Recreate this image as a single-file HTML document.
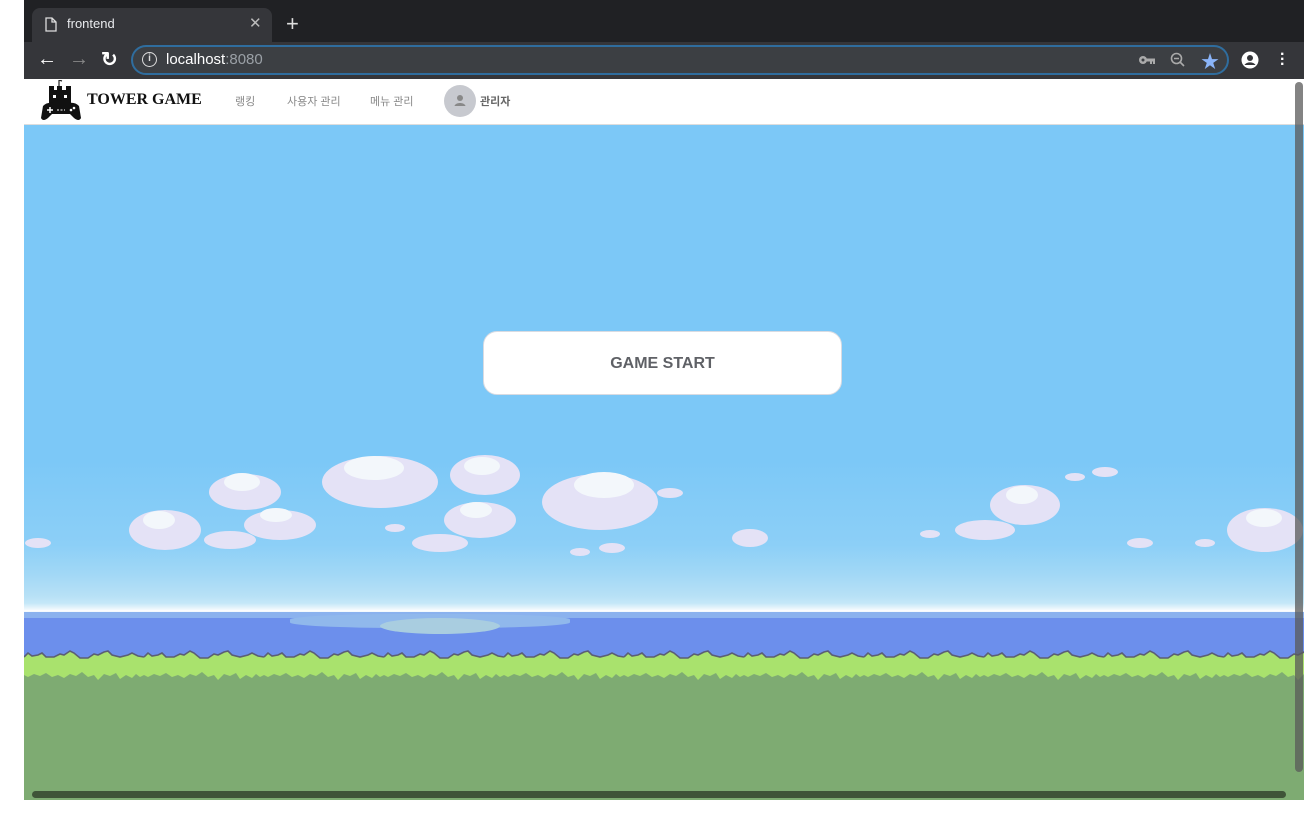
<!DOCTYPE html>
<html><head><meta charset="utf-8"><style>
*{margin:0;padding:0;box-sizing:border-box}
body{width:1304px;height:828px;background:#fff;position:relative;overflow:hidden;font-family:"Liberation Sans","Noto Sans CJK KR",sans-serif}
.abs{position:absolute}
</style></head><body>
<!-- tab bar -->
<div class="abs" style="left:24px;top:0;width:1280px;height:42px;background:#202124"></div>
<div class="abs" style="left:32px;top:8px;width:240px;height:34px;background:#35363a;border-radius:8px 8px 0 0"></div>
<svg class="abs" style="left:45px;top:17px" width="12" height="15" viewBox="0 0 12 15"><path d="M1 1h6l4 4v9H1z M7 1v4h4" fill="none" stroke="#ddd" stroke-width="1.3"/></svg>
<div class="abs" style="left:67px;top:16px;color:#e8eaed;font-size:13px">frontend</div>
<div class="abs" style="left:249px;top:14px;color:#bbb;font-size:15px">✕</div>
<div class="abs" style="left:286px;top:11px;color:#ddd;font-size:22px">+</div>
<!-- toolbar -->
<div class="abs" style="left:24px;top:42px;width:1280px;height:37px;background:#35363a"></div>
<div class="abs" style="left:37px;top:48px;color:#fff;font-size:20px">←</div>
<div class="abs" style="left:69px;top:48px;color:#888;font-size:20px">→</div>
<div class="abs" style="left:101px;top:47px;color:#fff;font-size:20px;font-weight:bold">↻</div>
<div class="abs" style="left:131px;top:45px;width:1098px;height:30px;border:2px solid #2f6d9e;border-radius:15px;background:#3c3f43"></div>
<div class="abs" style="left:142px;top:52px;width:15px;height:15px;border:1.5px solid #ddd;border-radius:50%;color:#ddd;font-size:10px;text-align:center;line-height:12px;font-weight:bold">i</div>
<div class="abs" style="left:166px;top:51px;color:#fff;font-size:15px">localhost<span style="color:#9aa0a6">:8080</span></div>
<svg class="abs" style="left:1138px;top:54px" width="18" height="12"><circle cx="5" cy="6" r="4" fill="#aaa"/><circle cx="5" cy="6" r="1.5" fill="#3c3f43"/><rect x="8" y="4.5" width="9" height="3" fill="#aaa"/><rect x="12" y="6" width="2" height="4" fill="#aaa"/><rect x="15" y="6" width="2" height="4" fill="#aaa"/></svg>
<svg class="abs" style="left:1170px;top:52px" width="16" height="16"><circle cx="6.5" cy="6.5" r="5" fill="none" stroke="#aaa" stroke-width="1.6"/><path d="M4 6.5h5M10 10l4 4" stroke="#aaa" stroke-width="1.6"/></svg>
<div class="abs" style="left:1201px;top:48px;color:#8ab4f8;font-size:18px">★</div>
<svg class="abs" style="left:1241px;top:51px" width="18" height="18"><circle cx="9" cy="9" r="8.5" fill="#fff"/><circle cx="9" cy="7" r="3" fill="#35363a"/><path d="M3.5 14c2-3.5 9-3.5 11 0" fill="#35363a"/></svg>
<div class="abs" style="left:1280px;top:52px;color:#fff;font-size:16px;line-height:5px;font-weight:bold">·<br>·<br>·</div>
<!-- page header -->
<div class="abs" style="left:24px;top:79px;width:1280px;height:46px;background:#fff;border-bottom:1px solid #ddd"></div>
<svg class="abs" style="left:39px;top:80px" width="44" height="42" viewBox="0 0 44 42"><path d="M20 0v6M20 0l3 1" stroke="#222" stroke-width="1.2"/><rect x="10" y="10" width="22" height="18" fill="#111"/><rect x="10" y="6" width="5" height="5" fill="#111"/><rect x="18" y="6" width="5" height="5" fill="#111"/><rect x="27" y="6" width="5" height="5" fill="#111"/><rect x="14" y="15" width="3" height="3" fill="#fff"/><rect x="25" y="15" width="3" height="3" fill="#fff"/><path d="M4 26 Q8 22 14 23 H30 Q36 22 40 26 L42 38 Q40 42 35 38 L31 34 H13 L9 38 Q4 42 2 38Z" fill="#111"/><path d="M8 30h6M11 27v6" stroke="#fff" stroke-width="1.5"/><circle cx="32" cy="30" r="1.3" fill="#fff"/><circle cx="35" cy="28" r="1.3" fill="#fff"/><path d="M18 30h8" stroke="#fff" stroke-dasharray="2 1.5"/></svg>
<div class="abs" style="left:87px;top:91px;font-family:'Liberation Serif',serif;font-weight:bold;font-size:16px;color:#111">TOWER GAME</div>
<div class="abs" style="left:235px;top:93px;font-size:11px;color:#888">랭킹</div>
<div class="abs" style="left:287px;top:93px;font-size:11px;color:#888">사용자 관리</div>
<div class="abs" style="left:370px;top:93px;font-size:11px;color:#888">메뉴 관리</div>
<div class="abs" style="left:444px;top:85px;width:32px;height:32px;border-radius:50%;background:#c7c9cf"></div>
<svg class="abs" style="left:452px;top:93px" width="16" height="16"><circle cx="8" cy="5" r="3" fill="#888"/><path d="M2.5 13c1-4 10-4 11 0z" fill="#888"/></svg>
<div class="abs" style="left:480px;top:93px;font-size:11px;color:#666;font-weight:bold">관리자</div>
<!-- scene -->
<div class="abs" style="left:24px;top:125px;width:1280px;height:675px;background:linear-gradient(#7cc8f7 0px,#7cc8f7 335px,#8ccff7 420px,#a2d8f6 450px,#b6e0f6 470px,#c4e7f8 478px,#eef7fc 484px,#fff 486px,#d5ebf8 488px)"></div>
<div class="abs" style="left:24px;top:612px;width:1280px;height:48px;background:#6c8fec"></div>
<div class="abs" style="left:24px;top:612px;width:1280px;height:6px;background:#8bb2ee"></div>
<div class="abs" style="left:290px;top:614px;width:280px;height:14px;background:#90b8ec;border-radius:40%"></div>
<div class="abs" style="left:380px;top:618px;width:120px;height:16px;background:#a9cde0;border-radius:50%"></div>
<div class="abs" style="left:24px;top:660px;width:1280px;height:140px;background:#7eab72"></div>
<svg class="abs" style="left:24px;top:645px" width="1280" height="40">
<defs><pattern id="g" width="120" height="40" patternUnits="userSpaceOnUse">
<path d="M0 12 L4 8 L8 11 L14 10 L18 8 L22 12 L30 12 L36 9 L40 10 L46 6 L50 8 L56 13 L64 13 L70 9 L74 10 L80 7 L84 6 L88 10 L96 12 L104 10 L108 8 L114 11 L120 12 V30 L116 32 L112 29 L108 33 L102 30 L96 34 L92 28 L86 31 L80 29 L74 35 L70 30 L64 32 L58 27 L52 31 L46 29 L40 33 L34 30 L28 32 L22 28 L16 31 L10 29 L4 32 L0 30Z" fill="#a9e26d" stroke="none"/>
<path d="M0 12 L4 8 L8 11 L14 10 L18 8 L22 12 L30 12 L36 9 L40 10 L46 6 L50 8 L56 13 L64 13 L70 9 L74 10 L80 7 L84 6 L88 10 L96 12 L104 10 L108 8 L114 11 L120 12" fill="none" stroke="#5b5f74" stroke-width="1.6"/>
</pattern></defs>
<rect width="1280" height="40" fill="url(#g)"/>
</svg>
<svg class="abs" style="left:24px;top:440px" width="1280" height="140">
<g fill="#e4e2f6">
<ellipse cx="141" cy="90" rx="36" ry="20"/><ellipse cx="221" cy="52" rx="36" ry="18"/><ellipse cx="256" cy="85" rx="36" ry="15"/><ellipse cx="206" cy="100" rx="26" ry="9"/>
<ellipse cx="356" cy="42" rx="58" ry="26"/><ellipse cx="461" cy="35" rx="35" ry="20"/><ellipse cx="456" cy="80" rx="36" ry="18"/><ellipse cx="416" cy="103" rx="28" ry="9"/>
<ellipse cx="576" cy="62" rx="58" ry="28"/><ellipse cx="646" cy="53" rx="13" ry="5"/><ellipse cx="726" cy="98" rx="18" ry="9"/>
<ellipse cx="1001" cy="65" rx="35" ry="20"/><ellipse cx="961" cy="90" rx="30" ry="10"/><ellipse cx="1051" cy="37" rx="10" ry="4"/><ellipse cx="1081" cy="32" rx="13" ry="5"/>
<ellipse cx="1241" cy="90" rx="38" ry="22"/><ellipse cx="14" cy="103" rx="13" ry="5"/><ellipse cx="371" cy="88" rx="10" ry="4"/><ellipse cx="556" cy="112" rx="10" ry="4"/><ellipse cx="588" cy="108" rx="13" ry="5"/>
<ellipse cx="906" cy="94" rx="10" ry="4"/><ellipse cx="1116" cy="103" rx="13" ry="5"/><ellipse cx="1181" cy="103" rx="10" ry="4"/>
</g>
<g fill="#f3f7fb">
<ellipse cx="135" cy="80" rx="16" ry="9"/><ellipse cx="218" cy="42" rx="18" ry="9"/><ellipse cx="350" cy="28" rx="30" ry="12"/><ellipse cx="458" cy="26" rx="18" ry="9"/>
<ellipse cx="452" cy="70" rx="16" ry="8"/><ellipse cx="580" cy="45" rx="30" ry="13"/><ellipse cx="998" cy="55" rx="16" ry="9"/><ellipse cx="1240" cy="78" rx="18" ry="9"/><ellipse cx="252" cy="75" rx="16" ry="7"/>
</g>
</svg>
<!-- button -->
<div class="abs" style="left:483px;top:331px;width:359px;height:64px;background:#fff;border:1px solid #d8dbe2;border-radius:14px;text-align:center;line-height:64px;font-weight:bold;font-size:16px;color:#5f6166">GAME START</div>
<!-- scrollbars -->
<div class="abs" style="left:1295px;top:82px;width:8px;height:690px;background:rgba(90,90,90,.75);border-radius:4px"></div>
<div class="abs" style="left:32px;top:791px;width:1254px;height:7px;background:#3f5438;border-radius:4px"></div>
</body></html>
